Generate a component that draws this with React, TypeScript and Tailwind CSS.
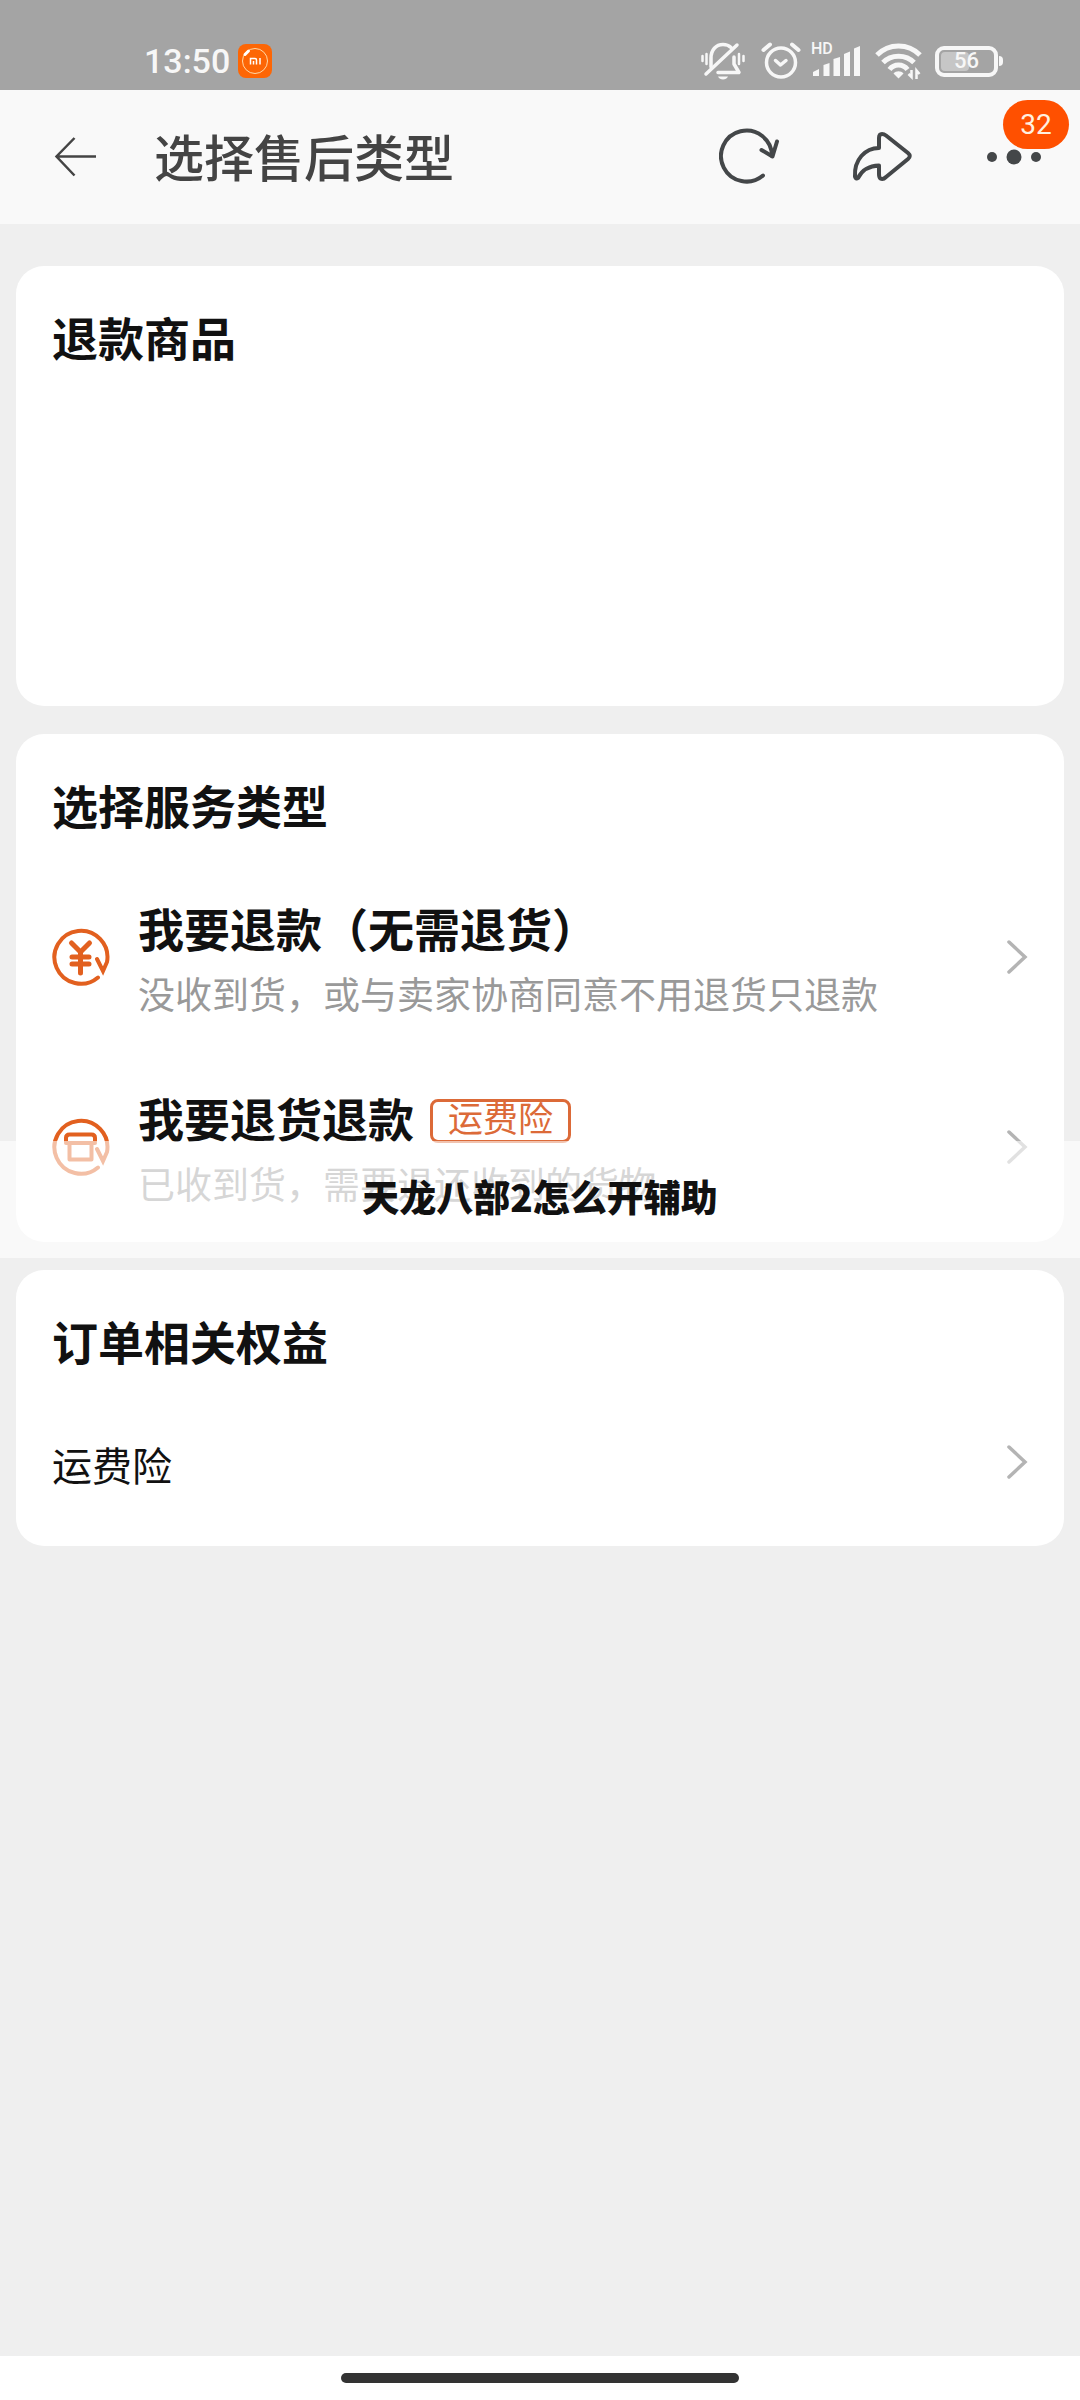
import type { ReactNode } from "react";

interface CardProps {
  title: string;
  children?: ReactNode;
  className?: string;
}

interface ServiceRowProps {
  icon: ReactNode;
  title: string;
  desc: string;
  tag?: string;
}

const MutedBell = () => (
  <svg width="44" height="38" viewBox="0 0 44 38" fill="none" stroke="#f7f7f7" strokeWidth="3.5" strokeLinecap="round">
    <path d="M10 25V16C10 8 15 2.5 22 2.5C25 2.5 28 3.5 30 5.5" />
    <path d="M33 15V22L38 30.5H17" strokeLinejoin="round" />
    <path d="M36 3L5 32" />
    <path d="M17 34.5H27C25.5 38.5 18.5 38.5 17 34.5Z" fill="#f7f7f7" stroke="none" />
    <path d="M1.5 14V19M5.5 12V22M38 12V22M42.5 14V19" strokeWidth="2.5" />
  </svg>
);

const Alarm = () => (
  <svg width="40" height="38" viewBox="0 0 40 38" fill="none" stroke="#f7f7f7" strokeWidth="3.5" strokeLinecap="round" strokeLinejoin="round">
    <circle cx="20" cy="20.5" r="14.5" />
    <path d="M2.5 8L9 2.5M31 2.5L37.5 8" strokeWidth="4" />
    <path d="M14.5 18.5L19.5 23L25 18.5" />
  </svg>
);

const SignalBars = () => (
  <svg width="50" height="32" viewBox="0 0 50 32" fill="#f7f7f7">
    <path d="M2 31V27L8 24V31Z" />
    <path d="M12.5 31V20L18.5 18V31Z" />
    <path d="M22.5 31V14L29 12V31Z" />
    <path d="M33 31V9L39 6.5V31Z" />
    <path d="M43 31V3.5L49 1V31Z" />
  </svg>
);

const Wifi = () => (
  <svg width="48" height="38" viewBox="0 0 48 38" fill="none" stroke="#f7f7f7" strokeWidth="5">
    <path d="M2 13C14 1 33 1 45 13" />
    <path d="M8 20.5C16 12 31 12 39 20.5" />
    <path d="M14.5 27.5C19 21.5 28 21.5 32.5 27.5" />
    <path d="M18.5 31.5C21 28.5 26 28.5 28.5 31.5L23.5 36.5Z" fill="#f7f7f7" stroke="none" />
    <path d="M36.5 28V35L33.5 32M41.5 37V28.5L44.5 32" strokeWidth="2.5" />
  </svg>
);

const MiLogo = () => (
  <svg width="34" height="34" viewBox="0 0 34 34" fill="none">
    <rect width="34" height="34" rx="8" fill="#fd6605" />
    <circle cx="17" cy="17" r="12.5" stroke="#ffd9a8" strokeWidth="1" />
    <path d="M7 10.5L10.5 7" stroke="#fff" strokeWidth="3" strokeLinecap="round" />
    <path d="M12.5 20.5V14.5H17Q18.5 14.5 18.5 16V20.5M15.5 20.5V17M22 14V20.5" stroke="#fff" strokeWidth="1.5" />
  </svg>
);

const StatusBar = () => (
  <div className="flex items-center justify-between h-[90px] pt-8 pl-36 pr-[77px] bg-[#a4a4a4] text-[#f7f7f7]">
    <div className="flex items-center gap-2">
      <span className="font-medium text-[34px] leading-10">13:50</span>
      <MiLogo />
    </div>
    <div className="flex items-center">
      <MutedBell />
      <span className="ml-4">
        <Alarm />
      </span>
      <span className="relative ml-2.5">
        <span className="absolute left-0 -top-1.5 font-medium text-[16px] leading-5">HD</span>
        <SignalBars />
      </span>
      <span className="ml-3.5">
        <Wifi />
      </span>
      <span className="relative flex items-center justify-center ml-3 w-[63px] h-[31px] border-4 border-[#f7f7f7] rounded-[9px]">
        <span className="absolute left-0.5 inset-y-0.5 w-7 bg-[#c6c6c6] rounded-sm" />
        <span className="relative font-medium text-[22px] leading-6">56</span>
      </span>
      <span className="ml-px w-1 h-2.5 bg-[#f7f7f7] rounded-r" />
    </div>
  </div>
);

const Header = () => (
  <header className="flex items-center h-[134px] pl-[52px] pr-[39px] bg-[#f9f9f9] text-[#444]">
    <button aria-label="返回">
      <svg width="46" height="42" viewBox="0 0 46 42" fill="none" stroke="#444" strokeWidth="2.5">
        <path d="M22.5 2L4.5 20.5L22.5 39.5M4.5 20.5H44" />
      </svg>
    </button>
    <h1 className="ml-14 pt-1.5 font-medium text-[50px] leading-[72px]">选择售后类型</h1>
    <button aria-label="刷新" className="ml-auto">
      <svg width="62" height="58" viewBox="0 0 62 58" fill="none" stroke="#444749" strokeWidth="4" strokeLinecap="round" strokeLinejoin="round">
        <path d="M44 47.5A25.5 25.5 0 1 1 53 28" />
        <path d="M42.5 22L53.5 28.5L58 13.5" />
      </svg>
    </button>
    <button aria-label="分享" className="ml-[70px]">
      <svg width="62" height="54" viewBox="0 0 62 54" fill="none" stroke="#444749" strokeWidth="4" strokeLinejoin="round">
        <path d="M28 18V8Q28 4 31 4Q33 4 35 5.5L57 23Q60.5 26 57 29L35 47Q32 50 29.5 48.5Q28 47.5 28 44V35.5Q13 36 7 48Q5 49.5 4 46.5C3 30 14 18 28 18Z" />
      </svg>
    </button>
    <button aria-label="更多" className="relative ml-[74px]">
      <svg width="54" height="16" viewBox="0 0 54 16" fill="#444749">
        <circle cx="5" cy="8" r="5" />
        <circle cx="27" cy="8" r="7.5" />
        <circle cx="49" cy="8" r="5" />
      </svg>
      <span className="absolute left-4 bottom-4 flex items-center justify-center w-[66px] h-[49px] bg-[#ff5000] rounded-full text-[28px] leading-8 text-[#fff1e0]">
        32
      </span>
    </button>
  </header>
);

const Chevron = () => (
  <svg width="24" height="38" viewBox="0 0 24 38" fill="none" stroke="#b4b4b4" strokeWidth="3.5" strokeLinecap="round" className="shrink-0">
    <path d="M5 4L21 19L5 34" />
  </svg>
);

const RefundRing = ({ children }: { children: ReactNode }) => (
  <svg width="58" height="58" viewBox="0 0 58 58" fill="none" stroke="#e2601f" strokeWidth="4" strokeLinecap="round" className="shrink-0">
    <path d="M46 49.500A26.500 26.500 0 1 1 55 34L51 43L45 31" />
    {children}
  </svg>
);

const YuanIcon = () => (
  <RefundRing>
    <path d="M19.5 15L28.500 24L37.500 15M20 29H37M20 36H37M28.500 25V45" strokeWidth="5" />
  </RefundRing>
);

const BoxIcon = () => (
  <RefundRing>
    <path d="M14 24V20Q14 16.500 17.500 16.500H39.500Q43 16.500 43 20V24M14 25H43" />
    <path d="M17.500 26V41.500H39.500V26" strokeLinejoin="round" />
  </RefundRing>
);

const Card = ({ title, children, className = "" }: CardProps) => (
  <section className={`px-9 pt-10 bg-white rounded-[28px] text-[#111] ${className}`}>
    <h2 className="font-bold text-[46px] leading-[68px]">{title}</h2>
    {children}
  </section>
);

const ServiceRow = ({ icon, title, desc, tag }: ServiceRowProps) => (
  <button className="flex items-center w-full h-[190px] text-left">
    {icon}
    <span className="flex flex-col ml-7 mr-auto pt-3">
      <span className="flex items-center gap-4">
        <span className="font-bold text-[46px] leading-[68px]">{title}</span>
        {tag && (
          <span className="px-[15px] border-[3px] border-[#dc6a38] rounded-lg text-[35px] leading-[38px] text-[#dc6a38]">
            {tag}
          </span>
        )}
      </span>
      <span className="text-[37px] leading-[64px] text-[#999]">{desc}</span>
    </span>
    <Chevron />
  </button>
);

const App = () => {
  return (
    <div className="flex flex-col min-h-screen bg-[#efefef] font-[Roboto,'Noto_Sans_CJK_SC',sans-serif]">
      <StatusBar />
      <Header />
      <main className="flex flex-col grow gap-7 px-4 pt-[42px] pb-7">
        <Card title="退款商品" className="min-h-[440px]" />
        <div className="relative">
          <Card title="选择服务类型">
            <div className="pt-5">
              <ServiceRow
                icon={<YuanIcon />}
                title="我要退款（无需退货）"
                desc="没收到货，或与卖家协商同意不用退货只退款"
              />
              <ServiceRow
                icon={<BoxIcon />}
                title="我要退货退款"
                desc="已收到货，需要退还收到的货物"
                tag="运费险"
              />
            </div>
          </Card>
          <div className="absolute -inset-x-4 -bottom-4 flex items-center justify-center h-[117px] pb-2 bg-white/60">
            <p className="font-black text-[37px] leading-[52px] text-[#111] font-['Noto_Sans_CJK_SC',sans-serif]">
              天龙八部2怎么开辅助
            </p>
          </div>
        </div>
        <Card title="订单相关权益" className="pb-6">
          <button className="flex items-center justify-between w-full h-[120px] mt-6 text-left">
            <span className="pt-3 text-[40px] leading-[60px]">运费险</span>
            <Chevron />
          </button>
        </Card>
      </main>
      <footer className="flex justify-center h-11 pt-[17px] bg-white">
        <div className="w-[398px] h-2.5 bg-[#333] rounded-full" />
      </footer>
    </div>
  );
};

export default App;
